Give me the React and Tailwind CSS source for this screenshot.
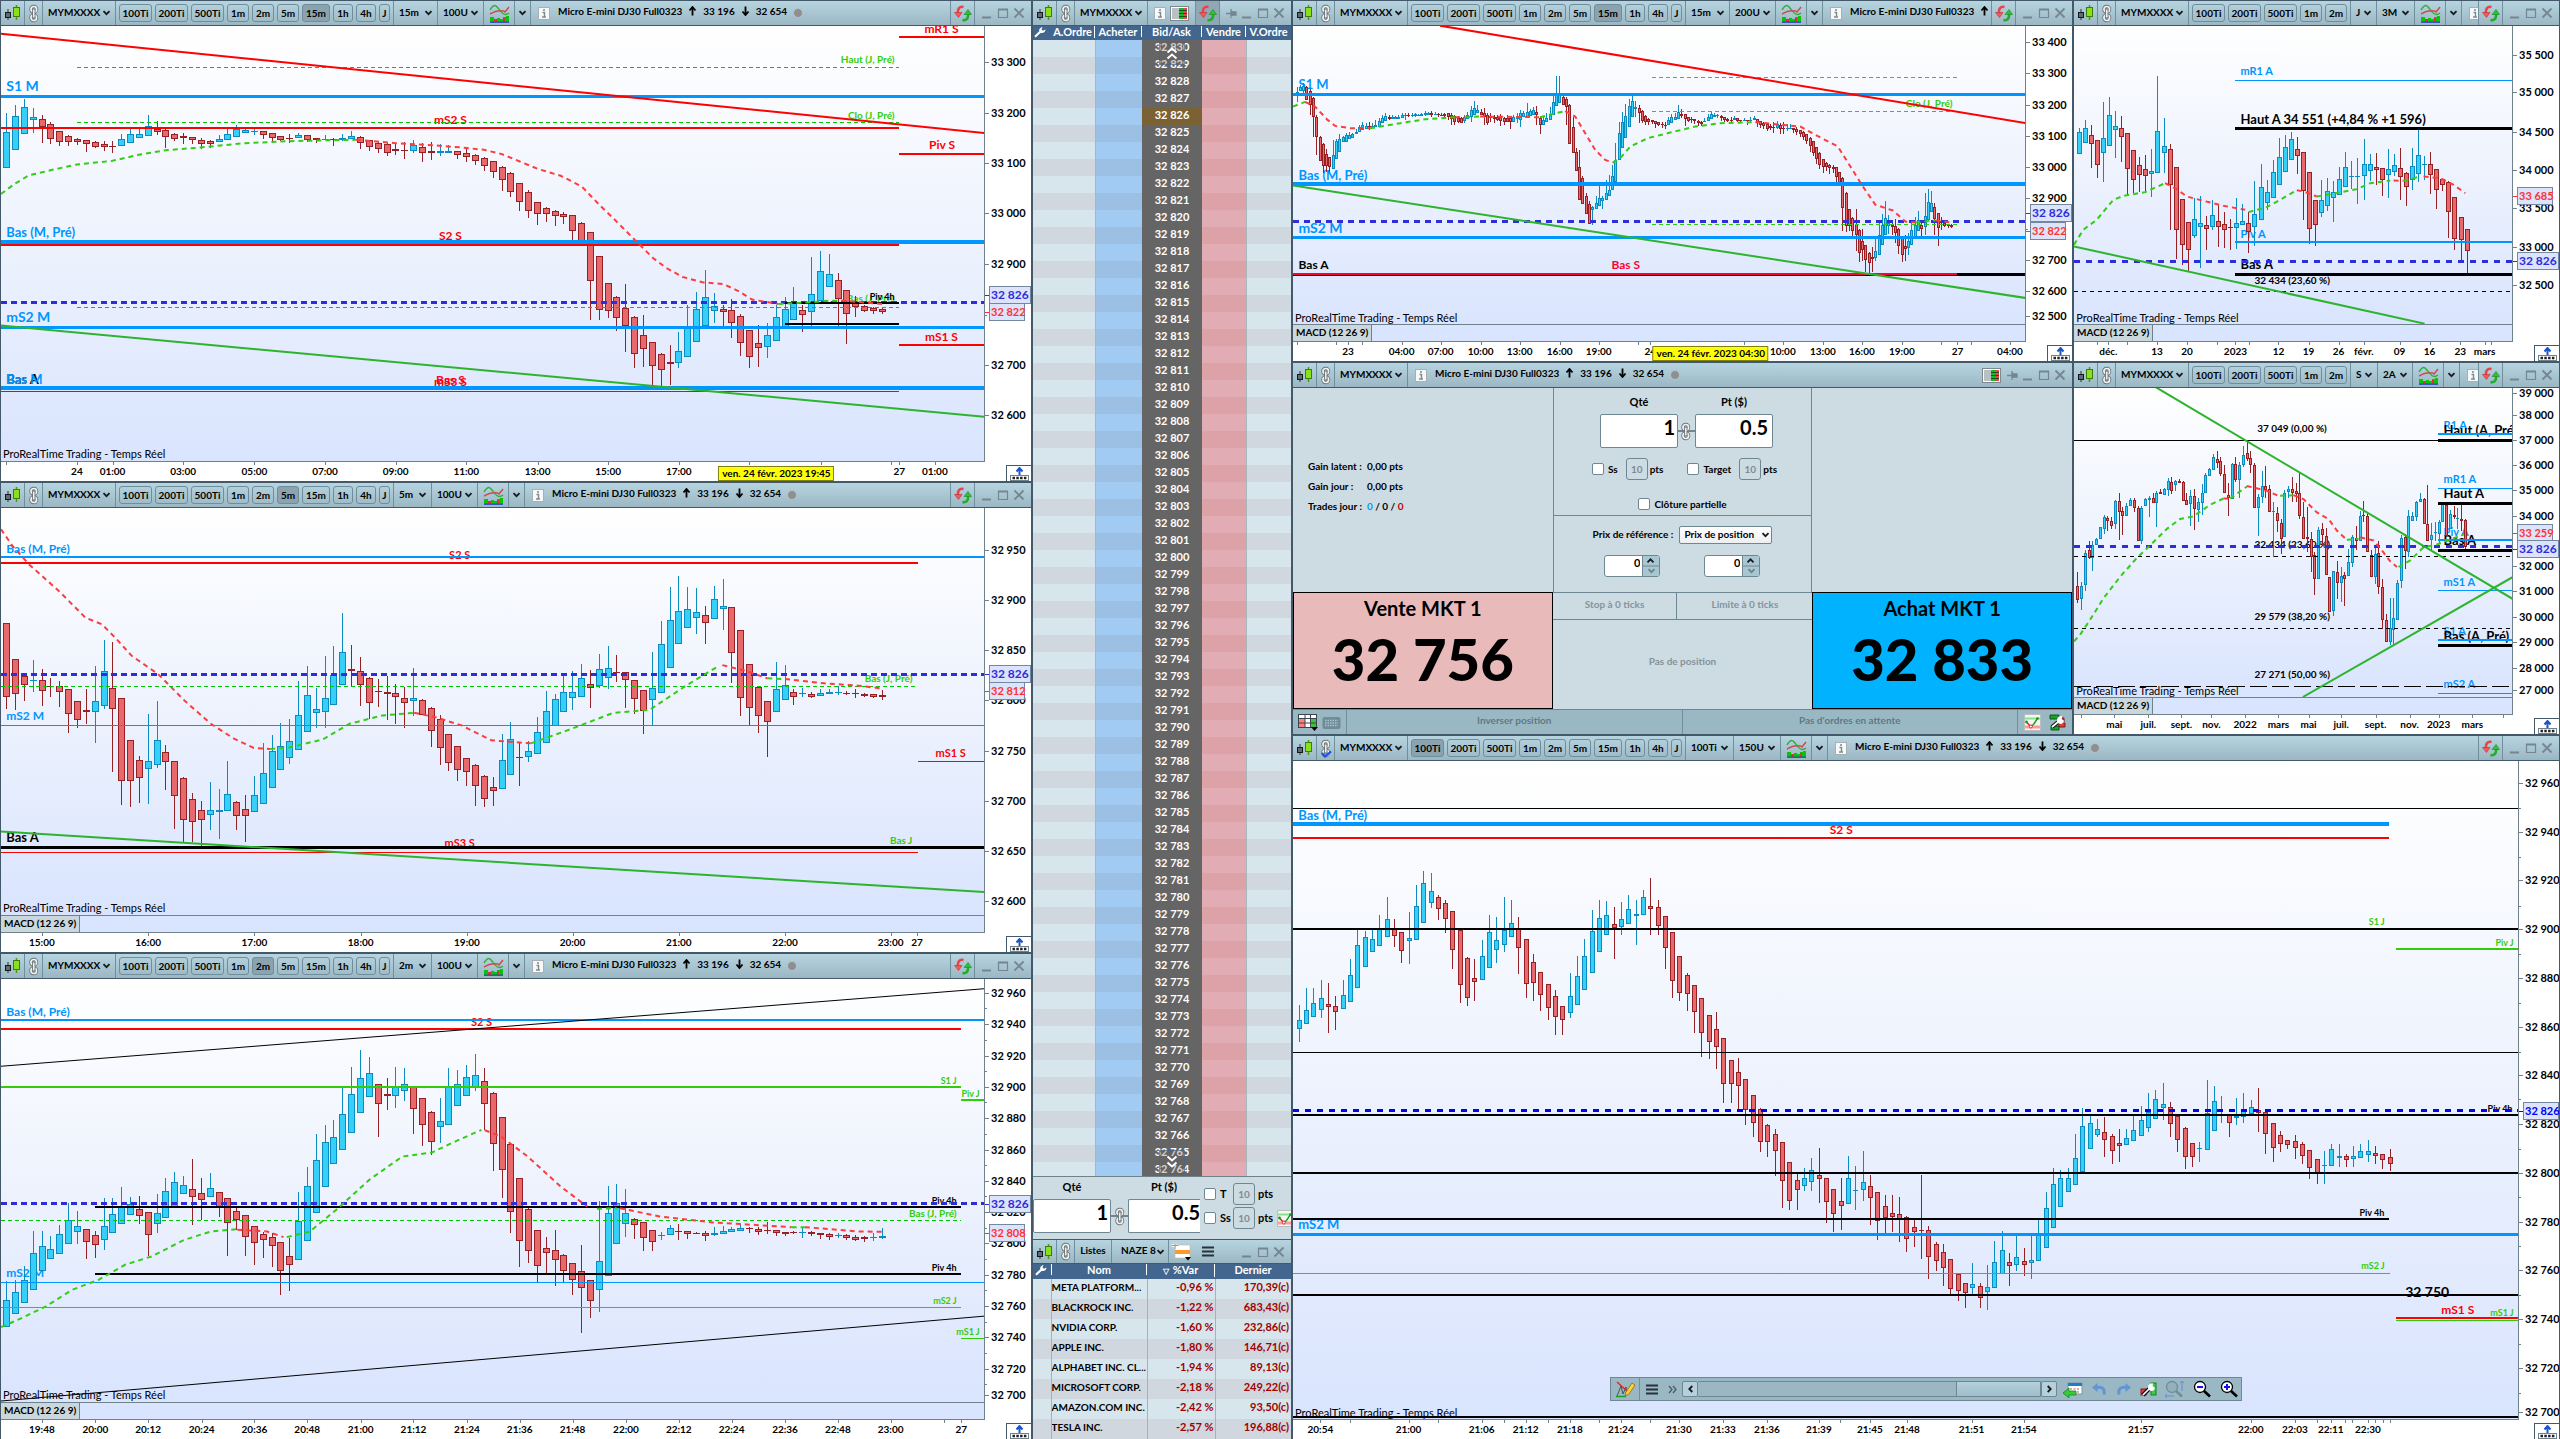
import React, { useLayoutEffect, useRef, useState } from "react";

/* ---------- price series: direction, high, body top, body bottom, low ---------- */

const series15m =
  "u340 397 506,u315 349 452,u297 322 402,u324 352 361 399,d345 358 380 429,d366 373 419 432,d393 394 428 440,d406 409 428 440,d414 418 428 436,d420 422 434 456,d425 427 441 446,d425 433 442 455,d424 439 442 461,u403 417 440,u386 403 431,u382 403 414,u345 378 410,d362 386 396 406,d388 389 413 446,d400 401 419 425,d400 409 416 432,d411 412 421 434,d415 420 432 447,d420 424 433 445,u404 419 427,u388 401 421,u375 388 412,u383 391 400,u386 393 396 407,d393 394 407 419,d399 400 416 424,d408 409 422 424,d401 414 416 430,u398 405 416,d404 407 421 428,d415 416 422 430,u404 418 419,d414 418 421 438,u402 415 422 424,u394 408 417,d410 412 429 448,d420 422 442 455,d427 430 447 459,d430 434 459 470,d433 447 455 467,d428 450 452 479,u420 437 453 459,d430 442 460 486,d428 454 461 482,u434 453 459 468,u436 453 459,d453 454 467 478,d449 459 473 488,d464 465 483 497,d472 475 498 515,d484 485 518 534,d500 502 542 573,d517 520 578 593,d549 550 608 633,d570 578 635 655,d606 607 644 675,d622 626 643 666,d632 634 650 678,d636 643 653 673,d646 647 695 723,d668 670 734 740,d696 698 845 960,d768 770 932 961,d849 850 935 956,d890 893 956 993,d852 924 979 1056,d950 952 1064 1107,d946 1006 1049 1104,d1026 1028 1100 1158,d1062 1063 1113 1165,d1035 1087 1094 1158,u997 1053 1091 1106,u917 978 1073,u876 928 1028,u810 892 979,u880 920 934 971,d917 928 938 978,d897 931 969 1016,d943 950 1031 1069,d990 991 1074 1107,d975 1030 1045 1104,u969 1007 1041 1077,u917 953 1024,u891 928 989,u861 906 960,d916 930 947 997,u773 883 937 978,u755 814 904,u762 823 863,d819 841 898 978,d870 871 944 1032,d890 910 921 953,d915 920 935 938,d922 925 935 942,d926 928 937 944";

const series5m =
  "d430 430 653 690,d541 541 644 692,d588 591 619 665,u543 604 607 638,d571 604 635 682,d597 620 625 655,d606 622 640 683,d630 631 705 762,d666 667 725 747,d631 694 701 736,u562 665 698 792,u483 575 682 690,d489 628 689 881,d656 658 908 981,d783 784 907 987,d831 844 899 974,u705 847 872 978,u667 785 860 867,d798 820 849 936,d846 848 953 1053,d897 898 1024 1093,d944 962 1031 1093,d969 995 1024 1103,u911 994 1010 1055,u931 995 1000 1083,u846 947 998,d968 970 1013 1056,d951 992 1013 1092,u892 949 1000,u793 884 977,u768 817 928,u732 802 875,u721 788 838 857,u607 710 814,u561 647 760,u627 691 703 749,u530 656 698 749,u501 587 677,u400 518 619,d498 569 577 620,d535 575 617 680,d595 596 671 720,d600 635 640 685,d590 638 646 723,d616 641 654 736,d625 656 673 747,u568 658 665 711,d660 662 708,d684 686 758 806,d709 720 808 858,d766 767 852 879,d801 802 875 908,d838 839 881 922,d857 859 922 982,d891 892 962 987,d897 926 937 982,u766 845 931,u729 782 890,d791 836 838 924,u786 818 836 849,u715 760 826,u636 695 793,u644 659 742,u587 640 700,u575 638 656 693,u555 598 655,d572 614 627 686,u525 569 620 628,u501 566 596 630,d528 580 583 610,d578 580 602 688,d602 604 661 707,d632 634 695 765,u517 626 664 738,u425 493 643,u321 422 568,u289 395 493,u321 389 445,u324 397 415 465,d380 407 431 495,u318 358 419,u297 379 389 451,d382 382 521 612,d451 452 658 712,d555 556 688 738,d620 623 713 764,d665 667 730 836,u549 631 700,u558 617 664,d630 640 653 677,u628 643 646 655,d640 646 653 656,u630 643 650,u629 640 646,u620 639 640 648,d637 641 646 648,d630 643 646 658,d643 645 650 655,d645 646 653 658,d634 649 653 662";

const series2m =
  "u993 1051 1132,u991 1027 1094,u949 990 1061,u843 911 1022,u843 889 964,u858 898 928,u825 853 914,u760 811 883,u785 829 848 884,d838 839 878 927,d843 857 887 926,u745 830 872 902,u744 793 850,u711 769 823,u741 762 797,d740 778 800 824,d787 788 857 918,u734 790 823 850,u685 724 805,u667 697 776,u677 704 734,d627 718 743 827,d684 730 752 810,u669 715 743,d726 727 773 801,d744 746 821 920,d772 784 811 842,d796 796 863 920,d829 829 881 945,d847 853 871 926,d850 862 889 951,d876 877 965 1035,d866 919 947 1025,u727 814 932,u651 709 875,u553 631 790,u526 577 710,u511 562 643,u413 493 601,u351 433 548,u300 385 490,u321 370 440,d401 403 461 561,d384 433 439 480,u351 409 437 474,u353 403 424 452,d412 412 476 551,d445 445 524 587,d484 485 575 614,u444 514 530 578,u353 409 524,u360 403 467,u345 382 437,u312 376 410 424,d354 394 461 540,d427 428 581 663,d501 502 661 746,d580 583 787 851,d684 685 875 953,d775 778 905 941,d841 842 949 998,d862 895 910 974,d840 901 932 1010,d914 916 965 997,d939 940 992 1035,d885 964 1016 1149,d991 991 1055 1104,u753 934 1021 1086,u708 791 980,u702 760 883,u717 790 823 861,d806 809 826 868,d817 818 865 903,d840 842 878 903,u846 857 860 871,u826 836 857,d824 843 844 870,d843 845 854 868,d848 850 851 853,d845 850 860 874,u833 850 855 860,u828 845 854,u832 839 848,u823 836 844,d831 834 837 850,d832 838 848 856,d817 842 843 854,d840 842 851 860,d846 847 853 860,d845 848 850 853,u832 847 848 866,d843 846 853 860,d849 850 857 868,d850 852 862 870,u850 856 857 866,d853 857 865 871,d856 861 870 875,d860 861 869 878,u850 862 866 875,u834 858 864 869";

const series15mEarlier =
  "u262 275 280 305,u255 262 272,u250 258 272 285,d258 262 300,d268 274 315 345,d290 295 352 410,d345 350 412 465,d408 412 482,d430 433 497 518,d447 462 498 515,d470 471 500 517,u420 465 507,u418 422 477,u403 418 455,u408 412 425,u400 405 425,u397 404 418,u398 402 415,u388 396 402,u375 382 397,u365 375 390,u370 378 388,d367 377 382 390,u368 377 380,u360 375 382,u355 362 380,u345 355 368,u340 348 362,d345 352 358 360,u345 351 358,u348 352 358,u345 350 358,u338 346 355,u340 345 349 360,d340 345 347 352,u338 344 347 350,u338 343 347 352,u342 345 348,u338 342 347,u333 340 345 349,u335 340 346,d334 340 346 352,u336 341 345,d338 342 346 351,d340 344 347,d340 343 347 352,d338 340 350 360,d340 344 356 374,d344 347 365 375,d348 355 367 370,d350 355 370,u345 352 362 368,u335 345 358,u318 330 350 366,u303 325 345,u315 330 340,d328 335 345,d325 340 350 375,d340 345 370 374,d338 348 354 367,d345 350 358 368,d345 350 360 364,d342 350 362 378,d350 355 365 375,d345 355 365,d350 355 365 387,u345 350 365,u340 348 358 370,u330 340 360 380,u333 340 350,u310 335 350,u328 334 348,u320 330 345,d318 335 345 375,d350 355 375 403,u350 360 375,u340 355 365,u320 345 360,u280 305 345,u228 280 318,u228 282 310,d285 292 315,d290 297 320 375,d312 315 432,d350 380 460,d445 455 512,d450 500 600,d530 535 612,d580 590 643,d605 612 672,u620 623 632 675,u590 610 628,u560 595 620,u590 595 605 627,u540 580 602,u525 570 590,u495 530 572,u430 480 548,u365 400 480,u335 365 445";

const seriesDay =
  "u384 395 461,u360 385 428,d375 406 433 503,d420 421 494 534,u306 415 458 546,u291 346 437,u333 379 391 474,d348 385 412 486,d399 400 506 585,d450 451 542 580,d471 496 524 578,d465 508 530 579,u447 514 521 591,u228 394 518,u354 439 458 520,d432 448 557 690,d501 502 692 777,d597 598 737 795,d666 667 752 813,u594 658 710 714,u588 670 683 804,d648 676 689 750,u600 646 683 690,d612 664 683 741,d636 674 692 746,d657 683 686 750,u594 670 686 748,u612 664 677,d638 670 696 759,u543 643 683 738,u492 562 661,u540 577 611 632,u480 517 596,u414 472 557,u405 442 515,u396 418 479,d411 448 467 522,d456 457 575 660,d515 517 689 732,d600 601 677 738,u540 600 640 652,u534 574 620 635,u543 577 596 666,u502 538 587,u456 502 563,u483 530 532 568,u474 530 532 612,u417 493 530 600,u462 493 512 545,d459 502 510 555,d504 505 542 588,u447 508 524 594,u461 496 515 530,d444 505 532 600,d515 520 563 620,u444 499 542 570,u390 466 521 548,u468 492 494 542,d456 493 524 582,d506 508 572 627,d537 539 557 575,d545 547 638 714,d591 592 717 752,d651 652 722 782,d687 688 755 820";

const seriesWeek =
  "d640 682 724 733,u670 682 722 755,u575 583 680 698,d545 575 597 602,u545 560 598 638,u536 541 560,u503 504 541,u467 475 510 524,d470 478 487 515,d475 485 502 510,u422 427 494 510,d402 426 458 542,d445 457 470 528,u432 441 470,u416 424 440,d418 422 447 460,d440 446 545,u440 447 545 557,u415 421 442,u410 416 424 473,d402 415 432,u396 402 432 503,d388 399 405,u386 390 407,u357 366 392 410,d353 367 394 405,u362 366 378 396,d358 364 372,d365 368 425,d400 424 437,u393 411 434 502,d390 411 451 512,u415 430 452 488,u374 401 432 468,u340 348 402,u325 330 350,u282 293 332,d275 300 312 325,d292 306 343 350,d318 343 400,d370 408 418 470,u312 314 420,d294 314 362 368,u307 316 362 415,u258 288 316 322,d245 281 298 305,d275 297 318 340,d310 317 447,u403 412 446 530,u334 381 412 433,d320 380 392 418,d378 388 458,u430 456 460 596,d445 462 486 520,d480 493 540 586,u392 400 535,u380 390 398 415,d352 388 402 430,d370 396 403 430,d342 400 470 480,d430 475 540,d443 535 541 580,d520 541 595 640,d580 590 662 710,u503 512 660,d492 510 527 560,d507 530 650,d655 655 762,u636 637 757 773,d608 640 672 722,u626 652 672 730,d640 650 660 743,u570 610 652,u528 535 612 626,d500 537 545 574,u456 470 546,d425 468 472 488,d458 472 580,d575 588 655,u560 585 655 675,d545 583 686 708,d662 685 784 812,d768 786 852,u720 808 852 862,u720 780 815 858,u665 672 785,u528 538 668 690,d524 534 576 630,u453 472 580 595,u460 471 487,u425 428 475 485,u400 420 430,d418 420 495,d378 494 545,u492 528 543 575,u488 518 522 545,u482 490 525 553,u432 436 490,d432 438 530,u452 466 510,d440 468 475 480,u448 478 480 510,d436 480 486 515,d480 482 565 570";

const seriesTicks =
  "u601 633 654 684,u563 611 643,u563 596 627,u546 585 611 630,d552 598 605 664,d580 602 616 657,u546 578 609,u498 533 593,u434 468 562,u436 449 515,u434 453 482,u401 432 469,u361 408 449,d410 432 447 472,d437 438 480 506,u394 451 458 510,u334 380 456,u303 328 418,u307 346 374 384,d356 360 387 411,d366 373 409 440,d391 391 478 520,d433 434 556 597,d494 495 585 603,d498 540 549 591,u455 491 545,u401 437 518,u405 455 478 506,u361 433 466 482,u366 417 449,d405 432 473 531,d453 453 553 585,d488 504 551 591,d527 527 578 614,d553 553 607 634,d568 580 627 668,d602 602 634 668,u530 580 618 630,u491 536 600,u454 491 567,u390 435 529,u367 406 482,u368 399 444,d383 421 430 498,u372 410 427 444,u356 386 420,u367 397 402 468,u345 361 400,d318 381 387 444,d366 383 425 444,d403 403 473 520,d439 439 547 585,d492 492 574 591,d530 533 576 614,d556 556 616 663,d584 585 663 717,d622 622 683 721,d617 654 694 743,d674 674 776 820,d724 724 776 820,d719 749 781 840,d765 765 834 869,d801 801 863 894,d831 832 906 928,d866 867 906 939,d878 887 926 982,d905 905 992 1053,d950 950 1037 1058,d975 991 1012 1058,u964 985 1003 1016,u942 969 994 1016,d920 980 989 1042,d985 985 1039 1086,d1011 1011 1066 1107,d987 1038 1048 1102,u938 985 1044,u960 1012 1014 1058,u927 994 1012 1038,d980 1003 1031 1090,d1018 1018 1081 1125,d1025 1049 1076 1108,d1025 1063 1073 1107,d1029 1067 1078 1129,d1071 1072 1121 1150,d1078 1096 1106 1140,d980 1101 1104 1166,d1093 1101 1162 1211,d1128 1132 1171 1193,d1134 1150 1186 1227,d1167 1167 1233 1245,d1201 1201 1237 1260,d1219 1219 1242 1275,u1176 1222 1231 1245,d1221 1226 1253 1275,u1180 1228 1240 1280,u1127 1173 1232,u1105 1147 1201,d1154 1174 1182 1226,u1116 1163 1179 1193,d1143 1170 1179 1204,u1114 1168 1175 1211,u1078 1114 1170,u1018 1054 1141,u964 1000 1098,u969 985 1050,u964 985 1018,u889 942 1001,u829 870 972,u843 863 921,u855 876 891 894,d851 884 901 939,d888 892 926 954,d878 909 914 951,u878 896 912,u849 879 903,u825 856 892,u796 838 874 883,u791 809 854,u775 822 831 856,d816 827 865 894,d847 847 901 928,d873 874 939 966,d907 907 939 961,u905 920 922 950,u768 841 923,u780 814 881,u803 843 845 863,d845 846 863 894,u807 847 853 867,u796 837 850 864,u812 827 844,d786 835 841 883,d838 838 888 932,d863 863 919 950,d882 890 910 928,d901 901 912 921,d890 904 919 943,d905 911 937 954,d923 923 963 988,d943 943 975 999,u927 956 959 999,u911 922 959,u911 936 941 961,d932 938 946 961,u914 938 943 961,u911 925 941,u901 925 934 950,d915 930 937 954,d932 932 946 966,d921 939 954 970";

function parse(text, x0, step) {
  return text.split(",").map((s, i) => {
    const [high, top, bottom, low] = s.slice(1).split(" ").map(Number);
    return { up: s[0] === "u", x: x0 + step * i, high, top, bottom, low: low ?? bottom };
  });
}

const RED = "#ff0000";
const BLUE = "#0096ff";
const GREEN = "#32cd0a";
const DGREEN = "#00c800";
const NAVY = "#2d2ddc";
const TREND = "#2db42d";
const BLACK = "#000000";
const G = "#32cd14";
const R = "#ff3c3c";

const m15 = parse(series15m, 10, 13.4);
const m15Wide = [
  ...parse(series15mEarlier, 13, 6.57),
  ...m15.map((c, i) => {
    const f = (v) => 219.5 + (v - 187) * 0.6152;
    return { up: c.up, x: 670.4 + 6.57 * i, high: f(c.high), top: f(c.top), bottom: f(c.bottom), low: f(c.low) };
  }),
];

/* levels: [y, x from, x to, colour, width, dash]; labels: [x, y, text, colour, size, anchor] */
const chart15m = {
  box: [2, 78, 1493, 1385],
  candles: m15,
  body: 7,
  averages: [
    [G, "2,583 22,553 44,527 80,510 117,494 171,483 211,465 252,451 305,443 372,430 440,424 506,421 540,420"],
    [R, "540,420 600,430 660,437 700,443 734,450 761,463 788,485 815,507 850,528 882,560 910,618 936,668 962,720 990,775 1010,805 1035,832 1065,848 1096,853 1120,875 1140,900 1180,913"],
    [G, "1180,913 1230,908 1250,904 1275,903"],
    [R, "1275,903 1337,913"],
  ],
  levels: [
    [200, 117, 1363, DGREEN, 1, "4 3"],
    [367, 117, 1363, DGREEN, 1, "4 3"],
    [922, 117, 1363, DGREEN, 1, "4 3"],
    [384, 2, 1363, RED, 2],
    [111, 1363, 1493, RED, 2],
    [462, 1363, 1493, RED, 2],
    [1035, 1363, 1493, RED, 2],
    [735, 2, 1363, RED, 2],
    [1175, 2, 1363, RED, 1],
    [287, 2, 1493, BLUE, 3],
    [726, 2, 1493, BLUE, 4],
    [983, 2, 1493, BLUE, 3],
    [1167, 2, 1493, BLUE, 4],
    [907, 2, 1493, NAVY, 3, "6 4"],
    [909, 1190, 1363, BLACK, 2],
    [972, 1190, 1363, BLACK, 2],
  ],
  trends: [
    [2, 101, 1493, 400, RED, 2],
    [2, 978, 1493, 1252, TREND, 2],
  ],
  labels: [
    [1427, 99, "mR1 S", RED, 12, "middle"],
    [1356, 190, "Haut (J, Pré)", GREEN, 10, "end"],
    [10, 272, "S1 M", BLUE, 14],
    [1356, 358, "Clo (J, Pré)", GREEN, 10, "end"],
    [683, 371, "mS2 S", RED, 12, "middle"],
    [1428, 447, "Piv S", RED, 12, "middle"],
    [10, 713, "Bas (M, Pré)", BLUE, 13],
    [683, 720, "S2 S", RED, 12, "middle"],
    [10, 968, "mS2 M", BLUE, 14],
    [1356, 908, "Bas (J, Pré)", GREEN, 10, "end"],
    [1356, 900, "Piv 4h", BLACK, 9, "end"],
    [1427, 1023, "mS1 S", RED, 12, "middle"],
    [10, 1155, "Bas A", BLACK, 13],
    [10, 1155, "Bas M", BLUE, 13],
    [683, 1155, "Bas S", "#ff0032", 12, "middle"],
    [683, 1161, "mS3 S", RED, 12, "middle"],
    [5, 1376, "ProRealTime Trading - Temps Réel", BLACK, 11, "start", 400],
  ],
  prices: [[187, "33 300"], [338, "33 200"], [490, "33 100"], [641, "33 000"], [793, "32 900"], [945, ""], [1096, "32 700"], [1248, "32 600"]],
  tags: [[887, "32 826", NAVY], [937, "32 822", "#ff3232"]],
  times: [[10, ""], [117, "24"], [171, "01:00"], [278, "03:00"], [386, "05:00"], [493, "07:00"], [600, "09:00"], [707, "11:00"], [815, "13:00"], [922, "15:00"], [1029, "17:00"], [1136, ""], [1244, ""], [1350, ""], [1363, "27"], [1417, "01:00"]],
  cursor: [1177, "ven. 24 févr. 2023 19:45"],
};

const chart5m = {
  box: [2, 84, 1493, 1312],
  candles: parse(series5m, 10, 13.4),
  body: 7,
  averages: [
    [R, "2,148 20,200 45,255 90,335 130,415 155,435 175,475 200,530 240,585 280,665 320,735 355,780 385,808 410,811"],
    [G, "410,811 440,806 490,782 530,735 580,710 628,702"],
    [R, "628,702 660,715 700,740 745,785 805,794"],
    [G, "805,794 860,755 930,702 985,693 1040,620 1090,560"],
    [R, "1095,558 1130,575 1163,598"],
    [G, "1163,598 1190,600"],
    [R, "1190,600 1250,613 1300,620 1335,628"],
  ],
  levels: [
    [231, 2, 1493, BLUE, 2],
    [249, 2, 1391, RED, 2],
    [586, 2, 1493, NAVY, 3, "6 4"],
    [620, 2, 1391, DGREEN, 1, "4 3"],
    [740, 2, 1493, BLUE, 1],
    [848, 1391, 1493, RED, 1],
    [1108, 2, 1493, BLACK, 3],
    [1121, 2, 1391, RED, 1],
  ],
  trends: [[2, 1060, 1493, 1243, TREND, 2]],
  labels: [
    [10, 219, "Bas (M, Pré)", BLUE, 12],
    [697, 239, "S2 S", RED, 11, "middle"],
    [1383, 610, "Bas (J, Pré)", GREEN, 10, "end"],
    [10, 725, "mS2 M", BLUE, 12],
    [1441, 836, "mS1 S", RED, 11, "middle"],
    [10, 1093, "Bas A", BLACK, 13],
    [697, 1107, "mS3 S", RED, 11, "middle"],
    [1383, 1097, "Bas J", GREEN, 10, "end"],
    [5, 1304, "ProRealTime Trading - Temps Réel", BLACK, 11, "start", 400],
  ],
  prices: [[210, "32 950"], [361, "32 900"], [513, "32 850"], [664, "32 800"], [816, "32 750"], [967, "32 700"], [1119, "32 650"], [1270, "32 600"]],
  tags: [[585, "32 826", NAVY], [635, "32 812", "#ff3232"]],
  times: [[64, "15:00"], [225, "16:00"], [386, "17:00"], [547, "18:00"], [708, "19:00"], [868, "20:00"], [1029, "21:00"], [1190, "22:00"], [1350, "23:00"], [1390, "27"]],
};

const chart2m = {
  box: [2, 87, 1493, 1357],
  candles: parse(series2m, 10, 13.4),
  body: 7,
  averages: [
    [G, "2,1132 30,1108 70,1070 110,1020 150,990 190,945 230,920 280,870 320,845 360,838"],
    [R, "360,840 405,845 430,862"],
    [G, "435,862 470,845 510,780 560,690 610,620 655,608 690,575 730,540"],
    [R, "735,541 760,560 800,620 850,710 890,770"],
    [G, "905,777 935,775"],
    [R, "940,775 1000,800 1080,818 1150,826 1200,832"],
    [G, "1200,832 1220,832"],
    [R, "1220,832 1300,845 1337,846"],
  ],
  levels: [
    [210, 2, 1493, BLUE, 2],
    [237, 2, 1457, RED, 2],
    [411, 2, 1457, GREEN, 2],
    [450, 1457, 1493, GREEN, 2],
    [760, 2, 1493, NAVY, 3, "6 4"],
    [771, 145, 1457, BLACK, 2],
    [811, 2, 1457, DGREEN, 1, "4 3"],
    [972, 145, 1457, BLACK, 2],
    [997, 2, 1493, BLUE, 1],
    [1072, 2, 1457, GREEN, 1],
    [1165, 1457, 1493, GREEN, 1],
  ],
  trends: [
    [2, 349, 1493, 116, BLACK, 1],
    [2, 1354, 1493, 1099, BLACK, 1],
  ],
  labels: [
    [10, 197, "Bas (M, Pré)", BLUE, 12],
    [730, 227, "S2 S", RED, 11, "middle"],
    [1450, 402, "S1 J", GREEN, 9, "end"],
    [1485, 441, "Piv J", GREEN, 9, "end"],
    [1450, 763, "Piv 4h", BLACK, 9, "end"],
    [1450, 802, "Bas (J, Pré)", GREEN, 10, "end"],
    [1450, 963, "Piv 4h", BLACK, 9, "end"],
    [10, 983, "mS2 M", BLUE, 12],
    [1450, 1062, "mS2 J", GREEN, 9, "end"],
    [1485, 1155, "mS1 J", GREEN, 9, "end"],
    [5, 1349, "ProRealTime Trading - Temps Réel", BLACK, 11, "start", 400],
  ],
  prices: [[128, "32 960"], [175, ""], [222, "32 940"], [270, ""], [317, "32 920"], [364, ""], [410, "32 900"], [457, ""], [504, "32 880"], [552, ""], [600, "32 860"], [646, ""], [693, "32 840"], [740, ""], [787, "32 820"], [834, ""], [881, "32 800"], [928, ""], [975, "32 780"], [1022, ""], [1069, "32 760"], [1116, ""], [1163, "32 740"], [1210, ""], [1257, "32 720"], [1304, ""], [1336, "32 700"]],
  tags: [[762, "32 826", NAVY], [850, "32 808", "#ff3232"]],
  times: [[64, "19:48"], [145, "20:00"], [225, "20:12"], [306, "20:24"], [386, "20:36"], [466, "20:48"], [547, "21:00"], [627, "21:12"], [708, "21:24"], [788, "21:36"], [868, "21:48"], [949, "22:00"], [1029, "22:12"], [1109, "22:24"], [1190, "22:36"], [1270, "22:48"], [1350, "23:00"], [1431, ""], [1457, "27"]],
};

const chart15mWide = {
  box: [6, 78, 1471, 973],
  candles: m15Wide,
  body: 3,
  averages: [
    [G, "6,320 30,306"],
    [R, "30,306 50,320 75,360 90,378 120,385 160,385"],
    [G, "160,385 220,370 270,358 330,352"],
    [R, "330,352 350,352"],
    [G, "350,352 380,350"],
    [R, "380,350 500,352"],
    [G, "500,352 530,340 550,334"],
    [R, "550,334 570,350 590,400 610,450 630,480 645,488"],
    [G, "645,488 660,475 680,440 715,415 760,398 810,380 860,370 930,367"],
    [R, "930,367 985,375 1020,380 1050,405 1095,440 1120,500 1145,560 1170,615 1205,632 1230,665 1250,668"],
    [G, "1250,668 1290,662"],
    [R, "1290,662 1321,668"],
  ],
  levels: [
    [230, 723, 1334, GREEN, 1, "4 3"],
    [332, 723, 1334, GREEN, 1, "4 3"],
    [674, 723, 1334, GREEN, 1, "4 3"],
    [281, 6, 1471, BLUE, 3],
    [552, 6, 1471, BLUE, 4],
    [712, 6, 1471, BLUE, 3],
    [665, 6, 1471, NAVY, 3, "6 5"],
    [824, 6, 1471, BLACK, 3],
    [823, 6, 1334, "#ff0032", 2],
  ],
  trends: [
    [300, 77, 1471, 370, RED, 2],
    [6, 557, 1471, 895, TREND, 2],
  ],
  labels: [
    [17, 266, "S1 M", BLUE, 13],
    [1324, 322, "Clo (J, Pré)", GREEN, 10, "end"],
    [17, 541, "Bas (M, Pré)", BLUE, 13],
    [17, 699, "mS2 M", BLUE, 14],
    [17, 809, "Bas A", BLACK, 12],
    [671, 809, "Bas S", "#ff0032", 12, "middle"],
    [10, 966, "ProRealTime Trading - Temps Réel", BLACK, 11, "start", 400],
  ],
  prices: [[126, "33 400"], [219, "33 300"], [314, "33 200"], [407, "33 100"], [500, "33 000"], [594, "32 900"], [687, ""], [780, "32 700"], [873, "32 600"], [950, "32 500"]],
  tags: [[641, "32 826", NAVY], [694, "32 822", "#ff3232"]],
  times: [[13, ""], [91, ""], [116, "23"], [143, ""], [223, "04:00"], [301, "07:00"], [381, "10:00"], [459, "13:00"], [539, "16:00"], [617, "19:00"], [696, ""], [720, "24"], [907, ""], [985, "10:00"], [1065, "13:00"], [1143, "16:00"], [1223, "19:00"], [1301, ""], [1334, "27"], [1361, ""], [1439, "04:00"]],
  cursor: [841, "ven. 24 févr. 2023 04:30"],
};

const chartDay = {
  box: [12, 78, 1328, 973],
  candles: parse(seriesDay, 26, 18.17),
  body: 5,
  averages: [
    [G, "12,735 40,690 80,660 130,600 160,588 225,577 285,550"],
    [R, "285,550 320,568 350,590 400,603 460,618 525,630"],
    [G, "535,637 590,622 630,600 680,571"],
    [R, "680,571 700,575 740,590"],
    [G, "740,590 810,578 860,568 900,550 960,542"],
    [R, "970,542 1000,543"],
    [G, "1000,543 1050,530"],
    [R, "1060,530 1110,535 1150,555 1185,580"],
  ],
  levels: [
    [241, 496, 1328, BLUE, 1],
    [385, 496, 1328, BLACK, 3],
    [726, 496, 1328, BLUE, 2],
    [785, 12, 1328, NAVY, 3, "6 6"],
    [824, 496, 1328, BLACK, 3],
    [874, 12, 1328, BLACK, 1, "4 4"],
  ],
  trends: [[12, 740, 1063, 972, TREND, 2]],
  labels: [
    [511, 226, "mR1 A", BLUE, 11],
    [511, 371, "Haut A 34 551 (+4,84 % +1 596)", BLACK, 13],
    [511, 714, "Piv A", BLUE, 11],
    [511, 809, "Bas A", BLACK, 13],
    [553, 852, "32 434 (23,60 %)", BLACK, 10],
    [19, 966, "ProRealTime Trading - Temps Réel", BLACK, 11, "start", 400],
  ],
  prices: [[164, "35 500"], [277, "35 000"], [395, "34 500"], [509, "34 000"], [626, "33 500"], [743, "33 000"], [857, "32 500"]],
  tags: [[588, "33 685", "#ff3232"], [785, "32 826", NAVY]],
  times: [[80, ""], [115, "déc."], [170, ""], [261, "13"], [351, "20"], [442, ""], [496, "2023"], [536, ""], [625, "12"], [715, "19"], [805, "26"], [881, "févr."], [988, "09"], [1078, "16"], [1170, "23"], [1243, "mars"], [1262, ""]],
};

const chartWeek = {
  box: [12, 84, 1328, 1018],
  candles: parse(seriesWeek, 22, 11.28),
  body: 3,
  averages: [
    [G, "12,850 30,830 60,785 100,720 150,655 200,598 240,560 290,510 330,480 370,472 420,437 460,418"],
    [R, "460,418 480,418"],
    [G, "480,418 530,382"],
    [R, "530,380 550,385 590,395 630,412"],
    [G, "630,410 670,408"],
    [R, "670,408 700,420 740,460 775,480 800,515 830,543"],
    [G, "830,543 865,540"],
    [R, "870,535 910,545 935,575 960,608 980,625"],
    [G, "985,625 1020,605 1060,565 1100,557 1180,527"],
  ],
  levels: [
    [241, 12, 1328, BLACK, 1],
    [222, 1104, 1328, BLUE, 2],
    [241, 1104, 1328, BLACK, 3],
    [385, 1104, 1328, BLUE, 1],
    [431, 1104, 1328, BLACK, 3],
    [543, 1104, 1328, BLUE, 2],
    [563, 12, 1328, NAVY, 3, "6 6"],
    [574, 1104, 1328, BLACK, 3],
    [592, 12, 1328, BLACK, 1, "4 4"],
    [694, 1104, 1328, BLUE, 1],
    [808, 12, 1328, BLACK, 1, "4 4"],
    [846, 1104, 1328, BLUE, 2],
    [862, 1104, 1328, BLACK, 3],
    [986, 12, 1328, BLACK, 1, "17 5"],
    [1006, 1104, 1328, BLUE, 1],
  ],
  trends: [
    [258, 82, 1328, 722, TREND, 2],
    [698, 1018, 1328, 655, TREND, 2],
  ],
  labels: [
    [561, 218, "37 049 (0,00 %)", BLACK, 10],
    [553, 569, "32 434 (23,60 %)", BLACK, 10],
    [553, 785, "29 579 (38,20 %)", BLACK, 10],
    [553, 962, "27 271 (50,00 %)", BLACK, 10],
    [1120, 208, "R1 A", BLUE, 11],
    [1120, 226, "Haut (A, Pré", BLACK, 13],
    [1120, 370, "mR1 A", BLUE, 11],
    [1120, 416, "Haut A", BLACK, 13],
    [1120, 531, "Piv A", BLUE, 11],
    [1120, 560, "Bas A", BLACK, 13],
    [1120, 681, "mS1 A", BLUE, 11],
    [1120, 832, "S1 A", BLUE, 11],
    [1120, 848, "Bas (A, Pré)", BLACK, 13],
    [1120, 992, "mS2 A", BLUE, 11],
    [19, 1011, "ProRealTime Trading - Temps Réel", BLACK, 11, "start", 400],
  ],
  prices: [[100, "39 000"], [167, "38 000"], [242, "37 000"], [317, "36 000"], [393, "35 000"], [470, "34 000"], [622, "32 000"], [697, "31 000"], [775, "30 000"], [851, "29 000"], [929, "28 000"], [998, "27 000"]],
  tags: [[523, "33 259", "#ff3232"], [572, "32 826", NAVY]],
  times: [[34, ""], [133, "mai"], [235, "juil."], [334, "sept."], [424, "nov."], [525, "2022"], [625, "mars"], [715, "mai"], [813, "juil."], [916, "sept."], [1018, "nov."], [1105, "2023"], [1206, "mars"], [1298, ""]],
};

const chartTicks = {
  box: [7, 57, 3010, 1523],
  candles: parse(seriesTicks, 21, 17.936),
  body: 5,
  averages: [],
  levels: [
    [161, 7, 3010, BLACK, 1],
    [198, 7, 2692, BLUE, 4],
    [229, 7, 2692, RED, 2],
    [429, 7, 2692, GREEN, 1],
    [432, 7, 3010, BLACK, 2],
    [476, 2709, 3010, GREEN, 2],
    [705, 7, 3010, BLACK, 1],
    [834, 7, 3010, "#0000ff", 3, "6 6"],
    [846, 7, 3010, BLACK, 2],
    [975, 7, 3010, BLACK, 2],
    [1078, 7, 2692, BLACK, 2],
    [1110, 7, 3010, BLUE, 3],
    [1197, 7, 2694, GREEN, 1],
    [1247, 7, 3010, BLACK, 2],
    [1302, 2709, 3010, GREEN, 1],
    [1299, 2709, 3010, RED, 2],
    [1519, 7, 3010, BLACK, 2],
  ],
  trends: [],
  labels: [
    [20, 189, "Bas (M, Pré)", BLUE, 13],
    [1350, 219, "S2 S", RED, 12, "middle"],
    [2681, 422, "S1 J", GREEN, 9, "end"],
    [2997, 469, "Piv J", GREEN, 9, "end"],
    [2994, 839, "Piv 4h", BLACK, 9, "end"],
    [2680, 1070, "Piv 4h", BLACK, 9, "end"],
    [20, 1099, "mS2 M", BLUE, 13],
    [2681, 1188, "mS2 J", GREEN, 9, "end"],
    [2785, 1252, "32 750", BLACK, 14, "middle"],
    [2860, 1290, "mS1 S", RED, 12, "middle"],
    [2997, 1293, "mS1 J", GREEN, 9, "end"],
    [12, 1519, "ProRealTime Trading - Temps Réel", BLACK, 11, "start", 400],
  ],
  prices: [[106, "32 960"], [161, ""], [215, "32 940"], [270, ""], [323, "32 920"], [379, ""], [431, "32 900"], [488, ""], [541, "32 880"], [596, ""], [650, "32 860"], [705, ""], [757, "32 840"], [811, ""], [866, "32 820"], [921, ""], [974, "32 800"], [1029, ""], [1084, "32 780"], [1138, ""], [1192, "32 760"], [1247, ""], [1300, "32 740"], [1355, ""], [1409, "32 720"], [1464, ""], [1508, "32 700"]],
  tags: [[836, "32 826", "#0000ff", true]],
  times: [[74, "20:54"], [146, ""], [290, "21:00"], [361, ""], [469, "21:06"], [523, ""], [577, "21:12"], [631, ""], [685, "21:18"], [756, ""], [810, "21:24"], [881, ""], [952, "21:30"], [1060, "21:33"], [1168, "21:36"], [1295, "21:39"], [1348, ""], [1420, "21:45"], [1511, "21:48"], [1669, "21:51"], [1797, "21:54"], [2084, "21:57"], [2353, "22:00"], [2461, "22:03"], [2515, ""], [2549, "22:11"], [2585, ""], [2602, ""], [2640, "22:30"], [2657, ""], [2676, ""], [2694, ""]],
};

/* ---------- icons ---------- */

const CandleIcon = () => (
  <svg width="17" height="18" viewBox="0 0 17 18" aria-hidden="true">
    <path d="M4 5v11M12.500 1v15" stroke="#2b3538" strokeWidth="1" />
    <path d="M12.500 1v15" stroke="#4c9a10" strokeWidth="1.500" />
    <rect x="1.500" y="8.500" width="5" height="5" fill="#5f6c72" stroke="#15191b" />
    <rect x="9.500" y="3.500" width="6" height="9" fill="#8be01c" stroke="#3d7d0c" />
  </svg>
);

const ChainIcon = ({ checked }) => (
  <svg width="12" height="19" viewBox="0 0 12 19" aria-hidden="true">
    <g fill="none" stroke="#6c7478" strokeWidth="3.400">
      <rect x="3" y="2.500" width="5.500" height="5.500" rx="2.500" />
      <rect x="3" y="11" width="5.500" height="5.500" rx="2.500" />
    </g>
    <g fill="none" stroke="#f1f3f3" strokeWidth="1.700">
      <rect x="3" y="2.500" width="5.500" height="5.500" rx="2.500" />
      <rect x="3" y="11" width="5.500" height="5.500" rx="2.500" />
    </g>
    <rect x="4.500" y="5" width="2.500" height="9" rx="1.200" fill="#eef1f1" stroke="#5c6468" strokeWidth="0.800" />
    {checked && <path d="M2 14l3 3.500 6-5" fill="none" stroke="#1b50e0" strokeWidth="2" />}
  </svg>
);

const LinkedIcon = () => (
  <span className="flex flex-1 items-center justify-center bg-[linear-gradient(#6f8792,#6f8792)] bg-[length:100%_2px] bg-center bg-no-repeat">
    <ChainIcon />
  </span>
);

const Chevron = () => (
  <svg width="9" height="6" viewBox="0 0 9 6" aria-hidden="true">
    <path d="M1.500 1.200l3 3 3-3" fill="none" stroke="#141a1d" strokeWidth="1.800" />
  </svg>
);

const IndicatorIcon = () => (
  <svg width="21" height="19" viewBox="0 0 21 19" aria-hidden="true">
    <path d="M1 6c3-5 5-6 8-2s6 9 11 5" fill="none" stroke="#2fae35" strokeWidth="1.400" />
    <path d="M1 10c3-1 4-3 8-3s6-1 7 1l4-5" fill="none" stroke="#d0474d" strokeWidth="1.400" />
    <path d="M1 18V13h4v2h3v-1h3v1h3v-2h3v-1h3v6z" fill="#08c408" />
    <path d="M5 15h3v3H5zM14 14h2v4h-2z" fill="#e23030" />
    <path d="M1 18.200h19" stroke="#1c3fc0" strokeWidth="1.200" />
  </svg>
);

const InfoIcon = () => (
  <svg width="12" height="13" viewBox="0 0 12 13" aria-hidden="true">
    <rect x="0.500" y="0.500" width="11" height="12" fill="#f7f8f8" stroke="#a7b1b5" />
    <path d="M5 3h2M4.500 5.500H6.500V10M4 10h4" stroke="#7d8a90" strokeWidth="1.400" fill="none" />
  </svg>
);

const RefreshIcon = () => (
  <svg width="18" height="17" viewBox="0 0 18 17" aria-hidden="true">
    <path d="M9.500 2C5.500 1 3.500 4 4 8" fill="none" stroke="#e8454b" strokeWidth="2.600" />
    <path d="M0.500 7.500h7.500l-3.500 5z" fill="#f0595e" stroke="#c42a30" strokeWidth="0.600" />
    <path d="M8.500 15c4 1 6-2 5.500-6" fill="none" stroke="#1fae28" strokeWidth="2.600" />
    <path d="M10 9.500h7.500L14 4.500z" fill="#2cc436" stroke="#158a1d" strokeWidth="0.600" />
  </svg>
);

const PinIcon = () => (
  <svg width="11" height="9" viewBox="0 0 11 9" aria-hidden="true">
    <path d="M0 4.500h5M5 0v9M5 2l2 1h3v3H7L5 7z" fill="#74878f" stroke="#74878f" strokeWidth="1.300" />
  </svg>
);

const LadderIcon = () => (
  <svg width="19" height="15" viewBox="0 0 19 15" aria-hidden="true">
    <rect x="0.500" y="0.500" width="18" height="14" fill="#fff" stroke="#7c8a90" />
    <rect x="2" y="2" width="7" height="11" fill="#b9c0c3" />
    <rect x="9" y="2" width="4" height="11" fill="#0fbf20" />
    <rect x="13" y="2" width="4" height="11" fill="#e8444b" />
    <path d="M9 4.500h8M9 7.500h8M9 10.500h8" stroke="#104b16" strokeWidth="0.900" />
  </svg>
);

const WrenchIcon = () => (
  <svg width="12" height="12" viewBox="0 0 12 12" className="block" aria-hidden="true">
    <path d="M1 10.800L6 6" stroke="#fff" strokeWidth="2.200" />
    <path d="M5.500 6.500C4.500 3.500 6 1.500 8.500 1L7.500 3.500 9 4.800 11.500 3.500C11.500 6 9 8 5.500 6.500z" fill="#fff" />
  </svg>
);

const CheckChartIcon = () => (
  <svg width="17" height="17" viewBox="0 0 17 17" aria-hidden="true">
    <rect x="0.500" y="0.500" width="16" height="16" fill="#f4f6f6" stroke="#b7bfc2" />
    <path d="M1 4.500h15" stroke="#8ce08c" strokeWidth="2" />
    <path d="M1 13h15" stroke="#ff9a9a" strokeWidth="3" />
    <path d="M2.500 8l4 4.500" stroke="#e02020" strokeWidth="1.400" />
    <path d="M6.500 12.500l3-2 4-6" stroke="#12a012" strokeWidth="1.400" fill="none" />
    <circle cx="2.500" cy="8" r="1.400" fill="#12a012" />
    <circle cx="6.800" cy="12.500" r="1.500" fill="#fff" stroke="#e02020" />
    <circle cx="13.500" cy="4.500" r="1.300" fill="#12a012" />
  </svg>
);

const WinControls = ({ pin }) => (
  <div className="flex h-full items-center gap-1 pr-1.5 pl-1.5">
    {pin && <PinIcon />}
    <button aria-label="Réduire">
      <svg width="12" height="12" viewBox="0 0 12 12"><path d="M1 10.500h9" stroke="#74878f" strokeWidth="2" /></svg>
    </button>
    <button aria-label="Agrandir">
      <svg width="12" height="12" viewBox="0 0 12 12"><path d="M1.500 10.500v-8h9v8z" stroke="#74878f" fill="none" strokeWidth="1.200" /><path d="M1 2.500h10" stroke="#74878f" strokeWidth="2" /></svg>
    </button>
    <button aria-label="Fermer">
      <svg width="12" height="12" viewBox="0 0 12 12"><path d="M1.500 1.500l9 9M10.500 1.500l-9 9" stroke="#74878f" strokeWidth="1.800" /></svg>
    </button>
  </div>
);

/* ---------- title bar ---------- */

const BAR = "flex h-[25px] shrink-0 items-center border-b border-[#43596a] bg-linear-to-b from-[#b7d4e1] to-[#9ab7c3]";
const SEG = "flex h-full shrink-0 items-center justify-center border-r border-[#6f8f9c]";

function Pick({ value, label, width }) {
  return (
    <label className={`${SEG} ${width} relative justify-start pl-[5px]`}>
      <select aria-label={label} defaultValue={value} className="w-full appearance-none bg-transparent pb-0.5 text-[10px] font-bold outline-none">
        <option>{value}</option>
      </select>
      <span className="pointer-events-none absolute right-[4px]"><Chevron /></span>
    </label>
  );
}

const FRAMES = ["100Ti", "200Ti", "500Ti", "1m", "2m", "5m", "15m", "1h", "4h", "J"];
const FRAME_W = { "100Ti": "w-[33px]", "200Ti": "w-[33px]", "500Ti": "w-[33px]", "1m": "w-[22px]", "2m": "w-[22px]", "5m": "w-[22px]", "15m": "w-[28px]", "1h": "w-[20px]", "4h": "w-[20px]", J: "w-[11px]" };

function Quote({ short }) {
  return (
    <div className="flex h-5 min-w-0 flex-1 items-center gap-x-1.5 pb-1 text-[10px] leading-4 font-bold whitespace-nowrap">
      <span>Micro E-mini DJ30 Full0323</span>
      <svg width="9" height="10" viewBox="0 0 9 10"><path d="M4.500 9.500V2M1.500 4.500l3-3.500 3 3.500" fill="none" stroke="#000" strokeWidth="1.800" /></svg>
      {!short && (
        <>
          <span>33 196</span>
          <svg width="9" height="10" viewBox="0 0 9 10"><path d="M4.500 0.500V8M1.500 5.500l3 3.500 3-3.500" fill="none" stroke="#000" strokeWidth="1.800" /></svg>
          <span>32 654</span>
          <span className="mt-1 h-2.5 w-2.5 rounded-full border border-[#b9c4c8] bg-[#8d8f90]" />
        </>
      )}
    </div>
  );
}

function ChartBar({ active, frame, units, frames = FRAMES, quote = "full", frameWidth, unitWidth, checked }) {
  return (
    <div className={BAR}>
      <div className={`${SEG} w-6`}><CandleIcon /></div>
      <div className={`${SEG} w-[18px]`}><ChainIcon checked={checked} /></div>
      <Pick value="MYMXXXX" label="Instrument" width="w-[73px]" />
      <div className={`${SEG} gap-[3px] px-[3px]`}>
        {frames.map((f) => (
          <button
            key={f}
            className={`${FRAME_W[f]} h-[18px] rounded-[3px] border border-[#6f8d9a] pb-px text-[10px] leading-none font-bold ${f === active ? "bg-[#8ba3ae]" : ""}`}
          >
            {f}
          </button>
        ))}
      </div>
      <Pick value={frame} label="Unité de temps" width={frameWidth} />
      <Pick value={units} label="Historique" width={unitWidth} />
      <div className={`${SEG} w-[31px]`}><IndicatorIcon /></div>
      <button aria-label="Indicateurs" className={`${SEG} w-4`}><Chevron /></button>
      <div className="flex h-full min-w-0 flex-1 items-center gap-2 overflow-hidden pl-[7px]">
        <span className="shrink-0"><InfoIcon /></span>
        {quote && <Quote short={quote === "short"} />}
      </div>
      <button aria-label="Actualiser" className={`${SEG} w-[25px] border-l`}><RefreshIcon /></button>
      <WinControls />
    </div>
  );
}

/* ---------- charts ---------- */

function useSize() {
  const ref = useRef(null);
  const [size, setSize] = useState({ w: 0, h: 0 });
  useLayoutEffect(() => {
    const read = () => {
      const r = ref.current.getBoundingClientRect();
      setSize({ w: r.width, h: r.height });
    };
    read();
    const watch = new ResizeObserver(read);
    watch.observe(ref.current);
    return () => watch.disconnect();
  }, []);
  return [ref, size];
}

function Candle({ c, X, Y, body }) {
  const cx = Math.round(X(c.x));
  const half = (body - 1) / 2;
  const top = Math.round(Y(c.top));
  const h = Math.max(1, Math.round(Y(c.bottom)) - top);
  const high = Math.round(Y(c.high));
  const low = Math.round(Y(c.low));
  const edge = c.up ? "#0a8cc0" : "#962023";
  return (
    <g>
      <rect x={cx} y={high} width={1} height={Math.max(1, low - high)} fill={edge} />
      <rect x={cx - half} y={top} width={body} height={h} fill={edge} />
      {h > 2 && <rect x={cx - half + 1} y={top + 1} width={body - 2} height={h - 2} fill={c.up ? "#35cff8" : "#e8696b"} />}
    </g>
  );
}

function PriceTag({ y, text, fill, narrow }) {
  const main = fill !== "#ff3232" && !narrow;
  return (
    <g>
      <rect x={0} y={y} width={4} height={1} fill={fill} />
      <rect x={4.5} y={y - 8.5} width={main ? 41 : 35} height={17} fill="#dbe4fb" stroke="#7487a0" />
      <text x={6} y={y + 4} fontSize={main ? 12 : 11} fontWeight={700} fill={fill}>{text}</text>
    </g>
  );
}

function Chart({ spec, macd, axis = "w-[46px]" }) {
  const [ref, { w, h }] = useSize();
  const [x0, y0, x1, y1] = spec.box;
  const X = (v) => ((v - x0) / (x1 - x0)) * w;
  const Y = (v) => ((v - y0) / (y1 - y0)) * h;
  return (
    <div className="flex min-h-0 flex-1 bg-white">
      <div className="flex min-w-0 flex-1 flex-col">
        <div ref={ref} className="min-h-0 flex-1 overflow-hidden border-r border-[#6f828c] bg-linear-to-b from-white via-[#edf2fd] to-[#d9e4fe]">
          <svg width={w} height={h} className="block">
            {spec.labels.map(([x, y, text, fill, size, anchor = "start", weight = 700], i) => (
              <text key={i} x={X(x)} y={Y(y)} fill={fill} fontSize={size} textAnchor={anchor} fontWeight={weight}>{text}</text>
            ))}
            <g shapeRendering="crispEdges">
              {spec.candles.map((c, i) => <Candle key={i} c={c} X={X} Y={Y} body={spec.body} />)}
              {spec.levels.map(([y, from, to, stroke, width, dash], i) => (
                <line key={i} x1={X(from)} x2={X(to)} y1={Math.round(Y(y)) + (width % 2) / 2} y2={Math.round(Y(y)) + (width % 2) / 2} stroke={stroke} strokeWidth={width} strokeDasharray={dash} />
              ))}
            </g>
            {spec.averages.map(([stroke, pts], i) => (
              <polyline key={i} points={pts.split(" ").map((p) => p.split(",").map(Number)).map(([x, y]) => `${X(x)},${Y(y)}`).join(" ")} fill="none" stroke={stroke} strokeWidth="2" strokeDasharray="5 4" />
            ))}
            {spec.trends.map(([ax, ay, bx, by, stroke, width], i) => (
              <line key={i} x1={X(ax)} y1={Y(ay)} x2={X(bx)} y2={Y(by)} stroke={stroke} strokeWidth={width} />
            ))}
          </svg>
        </div>
        {macd && (
          <div className="h-[17px] shrink-0 border-t border-r border-[#6f828c] bg-[#d9e4fe]">
            <span className="inline-block h-full border-r border-[#6f828c] bg-[#cad8de] px-[3px] align-top text-[10px] leading-[14px] font-bold">MACD (12 26 9)</span>
          </div>
        )}
        <div className="h-5 shrink-0 border-t border-[#6f828c]">
          <svg width={w} height={19} className="block overflow-visible">
            {spec.times.map(([x, t], i) => (
              <g key={i}>
                <rect x={Math.round(X(x))} y={0} width={1} height={3} fill="#6f828c" />
                <text x={X(x)} y={13} fontSize={10} fontWeight={700} textAnchor="middle">{t}</text>
              </g>
            ))}
            {spec.cursor && (
              <g>
                <rect x={X(spec.cursor[0]) - 58} y={4.5} width={115} height={14} fill="#ffff00" stroke="#808010" />
                <text x={X(spec.cursor[0])} y={15} fontSize={10} fontWeight={700} textAnchor="middle">{spec.cursor[1]}</text>
              </g>
            )}
          </svg>
        </div>
      </div>
      <div className={`${axis} flex shrink-0 flex-col justify-between`}>
        <svg width="100%" height={h + 4} className="block">
          {spec.prices.map(([y, t], i) => (
            <g key={i}>
              <rect x={0} y={Math.round(Y(y))} width={t ? 4 : 2} height={1} fill="#6f828c" />
              <text x={6} y={Y(y) + 4} fontSize={11} fontWeight={700}>{t}</text>
            </g>
          ))}
          {spec.tags.map(([y, text, fill, narrow]) => (
            <PriceTag key={text} y={Math.round(Y(y))} text={text} fill={fill} narrow={narrow} />
          ))}
        </svg>
        <button aria-label="Clavier" className="flex h-4 w-[25px] items-center justify-center self-end border-t border-l border-[#43596a]">
          <svg width="19" height="14" viewBox="0 0 19 14">
            <path d="M9.500 8V1.500M6.500 4.500L9.500 1l3 3.500" stroke="#1c55c8" strokeWidth="2" fill="none" />
            <rect x="0.500" y="8.500" width="18" height="5" fill="#fff" stroke="#6f828c" />
            <path d="M2.500 11h14" stroke="#222" strokeWidth="2.500" strokeDasharray="2.500 1.300" />
          </svg>
        </button>
      </div>
    </div>
  );
}

const Panel = ({ children, className = "" }) => (
  <section className={`flex min-h-0 min-w-0 flex-col overflow-hidden ${className}`}>{children}</section>
);

/* ---------- order ladder and watch list ---------- */

const DEPTH = Array.from({ length: 67 }, (_, i) => `32 ${830 - i}`);

const HEAD = "h-[14px] p-0 align-top";
const HEAD_TEXT = "block border-white text-[11px] leading-[11px]";

function Ladder() {
  return (
    <div className="relative min-h-0 flex-1 overflow-hidden">
      <table className="w-full table-fixed border-collapse text-[11px]">
        <colgroup>
          <col className="w-[62px]" /><col className="w-[47px]" /><col className="w-[60px]" /><col className="w-[44px]" /><col />
        </colgroup>
        <thead>
          <tr className="bg-[#42668e] text-white">
            <th className={HEAD}><span className="flex items-start justify-between border-r border-white pr-0.5 pl-px text-[11px] leading-[11px]"><WrenchIcon />A.Ordre</span></th>
            <th className={HEAD}><span className={`${HEAD_TEXT} border-r`}>Acheter</span></th>
            <th className={HEAD}><span className={`${HEAD_TEXT} border-r`}>Bid/Ask</span></th>
            <th className={HEAD}><span className={`${HEAD_TEXT} border-r`}>Vendre</span></th>
            <th className={HEAD}><span className={HEAD_TEXT}>V.Ordre</span></th>
          </tr>
        </thead>
        <tbody>
          {DEPTH.map((p, i) => {
            const odd = i % 2;
            const side = odd ? "bg-[#d0d7df]" : "bg-[#d7e6ec]";
            return (
              <tr key={p} className="h-[17px]">
                <td className={`border-r border-[#a9b7bd] p-0 ${side}`} />
                <td className={`p-0 ${odd ? "bg-[#9cbfe4]" : "bg-[#a2cbf4]"}`} />
                <td className={`p-0 text-center align-top leading-[13px] font-bold text-white ${i === 4 ? "bg-[#7a6234]" : "bg-[#656565]"}`}>{p}</td>
                <td className={`border-r border-[#a9b7bd] p-0 ${odd ? "bg-[#dca2a7]" : "bg-[#e1acb3]"}`} />
                <td className={`p-0 ${side}`} />
              </tr>
            );
          })}
        </tbody>
      </table>
      <button aria-label="Monter" className="absolute top-[15px] left-[126px] flex h-6 w-[26px] items-center justify-center border border-[#42668e]/60 bg-[#656565]/30">
        <svg width="12" height="14" viewBox="0 0 12 14"><path d="M1.500 6.500L6 2.500l4.500 4M1.500 12.500L6 8.500l4.500 4" fill="none" stroke="#fff" strokeWidth="2" /></svg>
      </button>
      <button aria-label="Descendre" className="absolute bottom-0.5 left-[126px] flex h-6 w-[26px] items-center justify-center border border-[#42668e]/60 bg-[#656565]/30">
        <svg width="12" height="14" viewBox="0 0 12 14"><path d="M1.500 1.500L6 5.500l4.500-4M1.500 7.500L6 11.500l4.500-4" fill="none" stroke="#fff" strokeWidth="2" /></svg>
      </button>
    </div>
  );
}

const CHECK = "h-3 w-3 shrink-0 appearance-none rounded-[2px] border border-[#6f8792] bg-white";
const SMALL = "w-[22px] rounded-[3px] border border-[#6f8792] bg-transparent text-center text-[10px] font-bold text-[#7d8b92]";
const BIG = "rounded-[2px] border border-[#6f8792] bg-white text-right font-bold outline-none";

function LadderEntry() {
  return (
    <div className="flex h-[63px] shrink-0 border-t border-[#6f828c] bg-[#cddbe2] text-[11px] font-bold">
      <div className="flex w-[167px] items-end">
        <label className="flex w-[78px] flex-col items-center gap-1">
          Qté
          <input defaultValue="1" className={`${BIG} mb-1.5 h-[34px] w-full pr-0.5 pb-2 text-[20px]`} />
        </label>
        <span className="flex h-[46px] w-[17px]"><LinkedIcon /></span>
        <label className="flex w-[72px] flex-col items-center gap-1">
          Pt ($)
          <input defaultValue="0.5" className={`${BIG} mb-1.5 h-[34px] w-full rounded-r-none border-r-0 pb-2 text-[20px]`} />
        </label>
      </div>
      <div className="flex flex-1 flex-col justify-center gap-0.5 pb-1 pl-1">
        {["T", "Ss"].map((n) => (
          <div key={n} className="flex items-center">
            <label className="flex w-[29px] items-center gap-1"><input type="checkbox" className={CHECK} />{n}</label>
            <label className="flex items-center gap-[3px]"><input defaultValue="10" aria-label={`${n} points`} className={`${SMALL} h-[22px]`} />pts</label>
            {n === "Ss" && <span className="ml-1 w-4 overflow-hidden"><CheckChartIcon /></span>}
          </div>
        ))}
      </div>
    </div>
  );
}

const STOCKS = [
  ["META PLATFORM...", "-0,96 %", "170,39(c)"],
  ["BLACKROCK INC.", "-1,22 %", "683,43(c)"],
  ["NVIDIA CORP.", "-1,60 %", "232,86(c)"],
  ["APPLE INC.", "-1,80 %", "146,71(c)"],
  ["ALPHABET INC. CL...", "-1,94 %", "89,13(c)"],
  ["MICROSOFT CORP.", "-2,18 %", "249,22(c)"],
  ["AMAZON.COM INC.", "-2,42 %", "93,50(c)"],
  ["TESLA INC.", "-2,57 %", "196,88(c)"],
];

function WatchList() {
  return (
    <div className="shrink-0">
      <div className={`${BAR} border-t`}>
        <div className={`${SEG} w-6`}><CandleIcon /></div>
        <div className={`${SEG} w-[18px]`}><ChainIcon /></div>
        <span className={`${SEG} w-[37px] pb-0.5 text-[10px] font-bold`}>Listes</span>
        <label className={`${SEG} relative w-[57px] pl-[9px]`}>
          <select aria-label="Liste" className="w-full appearance-none bg-transparent pb-0.5 text-[10px] font-bold outline-none"><option>NAZE 8</option></select>
          <span className="pointer-events-none absolute right-[3px]"><Chevron /></span>
        </label>
        <div className="flex flex-1 items-center gap-2.5 pl-0.5">
          <svg width="21" height="19" viewBox="0 0 21 19">
            <path d="M4 0v7M0.500 3.500h7" stroke="#fff" strokeWidth="2.400" />
            <rect x="4" y="3" width="15" height="13" fill="#fff" stroke="#c9b79a" strokeWidth="0.600" />
            <rect x="4" y="8" width="15" height="4" fill="#ff9a2a" />
            <path d="M4 0v7M0.500 3.500h7" stroke="#8ba0a8" strokeWidth="1" />
            <path d="M14 15h6l-3 3.500z" fill="#000" />
          </svg>
          <svg width="12" height="11" viewBox="0 0 12 11"><path d="M0 1.500h12M0 5.500h12M0 9.500h12" stroke="#27333a" strokeWidth="2" /></svg>
        </div>
        <WinControls />
      </div>
      <table className="w-full table-fixed border-collapse text-[11px] font-bold">
        <colgroup><col className="w-[18px]" /><col className="w-[96px]" /><col className="w-[68px]" /><col /></colgroup>
        <thead>
          <tr className="h-[15px] bg-[#42668e] text-white">
            <th className={`${HEAD} pl-0.5`}><WrenchIcon /></th>
            <th className={HEAD}><span className={`${HEAD_TEXT} border-x`}>Nom</span></th>
            <th className={HEAD}><span className={`${HEAD_TEXT} border-r`}><span className="mr-1 text-[8px]">▽</span>%Var</span></th>
            <th className={HEAD}><span className={HEAD_TEXT}>Dernier</span></th>
          </tr>
        </thead>
        <tbody>
          {STOCKS.map(([n, v, d], i) => (
            <tr key={n} className={`h-5 leading-4 ${i % 2 ? "bg-[#d0d7df]" : "bg-[#d7e6ec]"}`}>
              <td className="border-r border-[#a3b3bb] p-0" />
              <td className="overflow-hidden border-r border-[#a3b3bb] p-0 align-top text-[10px] whitespace-nowrap">{n}</td>
              <td className="border-r border-[#a3b3bb] p-0 pr-px text-right align-top text-[#a00000]">{v}</td>
              <td className="p-0 pr-0.5 text-right align-top text-[#a00000]">{d}</td>
            </tr>
          ))}
        </tbody>
      </table>
    </div>
  );
}

/* ---------- order ticket ---------- */

function Stepper({ label }) {
  return (
    <div className="flex h-[22px] w-14 overflow-hidden rounded-[3px] border border-[#6f8792] bg-white">
      <input aria-label={label} defaultValue="0" className="min-w-0 flex-1 pr-0.5 pb-1 text-right text-[11px] font-bold outline-none" />
      <div className="flex w-[17px] flex-col border-l border-[#6f8792] bg-[#a9c6d3]">
        <button aria-label={`${label} plus`} className="flex flex-1 rotate-180 items-center justify-center border-t border-[#6f8792]"><Chevron /></button>
        <button aria-label={`${label} moins`} className="flex flex-1 items-center justify-center opacity-40"><Chevron /></button>
      </div>
    </div>
  );
}

function MarketButton({ title, price, className }) {
  return (
    <button className={`flex flex-col items-center border border-black ${className}`}>
      <span className="pt-[3px] text-[20px] leading-6 font-bold">{title}</span>
      <span className="pt-1.5 text-[58px] leading-[66px] font-black">{price}</span>
    </button>
  );
}

function Ticket() {
  const line = "border-[#6f8792]";
  return (
    <Panel className="bg-[#cddbe2]">
      <div className={BAR}>
        <div className={`${SEG} w-6`}><CandleIcon /></div>
        <div className={`${SEG} w-[18px]`}><ChainIcon /></div>
        <Pick value="MYMXXXX" label="Instrument" width="w-[73px]" />
        <div className="flex h-full min-w-0 flex-1 items-center gap-2 pl-[7px]"><InfoIcon /><Quote /></div>
        <LadderIcon />
        <WinControls pin />
      </div>
      <div className="grid min-h-0 flex-1 grid-cols-3 grid-rows-[204fr_117fr] text-[11px] font-bold">
        <div className="flex flex-col justify-center gap-1 pb-2 pl-[15px] text-[10px] leading-4">
          <dl className="grid grid-cols-[59px_auto] gap-y-1">
            <dt>Gain latent :</dt><dd>0,00 pts</dd>
            <dt>Gain jour :</dt><dd>0,00 pts</dd>
            <dt>Trades jour :</dt><dd><span className="text-[#0096ff]">0</span> / 0 / <span className="text-[#c00000]">0</span></dd>
          </dl>
        </div>
        <div className={`flex min-w-0 flex-col border-x ${line}`}>
          <div className={`flex flex-[131] flex-col items-center border-b pt-1.5 ${line}`}>
            <div className="flex items-end pl-2">
              <label className="flex flex-col items-center gap-1 leading-4">Qté<input defaultValue="1" className={`${BIG} h-[34px] w-[78px] pr-0.5 pb-2 text-[20px]`} /></label>
              <span className="flex h-[34px] w-[17px]"><LinkedIcon /></span>
              <label className="flex flex-col items-center gap-1 leading-4">Pt ($)<input defaultValue="0.5" className={`${BIG} h-[34px] w-[78px] pr-1 pb-2 text-[20px]`} /></label>
            </div>
            <div className="mt-2.5 flex items-center gap-6 pl-1 text-[10px]">
              <div className="flex items-center gap-2">
                <label className="flex items-center gap-1"><input type="checkbox" className={CHECK} />Ss</label>
                <label className="flex items-center gap-0.5"><input defaultValue="10" aria-label="Ss points" className={`${SMALL} h-[22px]`} />pts</label>
              </div>
              <div className="flex items-center gap-2">
                <label className="flex items-center gap-1"><input type="checkbox" className={CHECK} />Target</label>
                <label className="flex items-center gap-0.5"><input defaultValue="10" aria-label="Target points" className={`${SMALL} h-[22px]`} />pts</label>
              </div>
            </div>
            <label className="mt-4 flex items-center gap-1 text-[10px] leading-4"><input type="checkbox" className={CHECK} />Clôture partielle</label>
          </div>
          <div className="flex flex-[72] flex-col items-center gap-[11px] pt-2.5">
            <label className="flex items-center gap-1.5 text-[10px]">
              Prix de référence :
              <span className="relative flex items-center">
                <select className="h-[18px] w-[93px] appearance-none rounded-[2px] border border-[#6f8792] bg-linear-to-b from-white to-[#eceff1] pb-0.5 pl-1 text-[10px] font-bold"><option>Prix de position</option></select>
                <span className="pointer-events-none absolute right-0.5"><Chevron /></span>
              </span>
            </label>
            <div className="flex gap-11"><Stepper label="Stop" /><Stepper label="Limite" /></div>
          </div>
        </div>
        <div />
        <MarketButton title="Vente MKT 1" price="32 756" className="bg-[#e9baba]" />
        <div className="flex min-w-0 flex-col text-[10px] text-[#83949c]">
          <div className={`grid h-[28px] grid-cols-[125fr_135fr] border-y ${line}`}>
            <button className={`border-r pb-1 ${line}`}>Stop à 0 ticks</button>
            <button className="pb-1">Limite à 0 ticks</button>
          </div>
          <div className="flex flex-1 items-center justify-center pb-1.5">Pas de position</div>
        </div>
        <MarketButton title="Achat MKT 1" price="32 833" className="bg-[#00b2ff]" />
      </div>
      <div className="flex h-[25px] shrink-0 items-center border-t border-[#6f8792] bg-[#9ab8c4] text-[10px] font-bold text-[#5f7a86]">
        <div className={`${SEG} w-[54px] gap-1`}>
          <svg width="20" height="17" viewBox="0 0 20 17">
            <rect x="0.500" y="0.500" width="18" height="13" fill="#fff" stroke="#3a464c" />
            <rect x="1" y="5" width="6" height="8" fill="#ff8080" /><rect x="13" y="5" width="5" height="8" fill="#40c040" />
            <path d="M0 4.500h18M7 1v13M12.500 1v13M1 9h17" stroke="#3a464c" />
            <path d="M13 13h7l-3.500 4z" fill="#000" />
          </svg>
          <svg width="19" height="15" viewBox="0 0 19 15"><rect x="0.500" y="2" width="18" height="12" rx="2" fill="#6f8c98" /><path d="M3 5.500h13M3 8h13M3 10.500h13" stroke="#a9c2cc" strokeDasharray="1.500 1" strokeWidth="1.300" /></svg>
        </div>
        <button className={`${SEG} flex-1 basis-0 pb-1`}>Inverser position</button>
        <button className={`${SEG} flex-1 basis-0 pb-1`}>Pas d'ordres en attente</button>
        <div className="flex w-[54px] items-center justify-center gap-2">
          <CheckChartIcon />
          <svg width="17" height="17" viewBox="0 0 17 17">
            <path d="M1 1h9v4H1zM2 12h8v4H2z" fill="#17a12c" stroke="#0a5a16" /><path d="M9 4h6v4H9zM10 9h6v4h-6z" fill="#e23c42" stroke="#8c1418" />
            <path d="M3 13l6-5" stroke="#111" strokeWidth="4" /><path d="M3 13l6-5M9 8c-1-3 1-5 3-5v3l2 1c0 2-2 3-5 1z" stroke="#fff" strokeWidth="1.800" fill="#fff" />
          </svg>
        </div>
      </div>
    </Panel>
  );
}

/* ---------- drawing toolbar ---------- */

const Lens = ({ sign, faded }) => (
  <svg width="19" height="18" viewBox="0 0 19 18" aria-hidden="true" opacity={faded ? 0.5 : 1}>
    <path d="M10.500 10.500l6.500 6" stroke={faded ? "#4a6470" : "#000"} strokeWidth="2.600" />
    <circle cx="7" cy="7" r="5.500" fill={faded ? "#8fabb8" : "#fff"} stroke={faded ? "#4a6470" : "#000"} strokeWidth="1.300" />
    {sign && <path d={sign === "+" ? "M4 7h6M7 4v6" : "M4 7h6"} stroke="#1111ee" strokeWidth="2" />}
    {faded && <path d="M17 1v10M15 3l2-2 2 2M0 16h9M2 14l-2 2 2 2" stroke="#3a62d8" fill="none" />}
  </svg>
);

function DrawBar() {
  return (
    <div className="absolute bottom-[38px] left-1/2 flex h-6 w-[632px] -translate-x-1/2 items-center border border-[#6f8792] bg-[#9ab7c4]">
      <button aria-label="Dessiner" className={`${SEG} w-[29px]`}>
        <svg width="19" height="17" viewBox="0 0 19 17">
          <path d="M1 15l4-10 2 8 3-7 1 7" stroke="#4a565c" fill="none" /><path d="M1 1l10 9" stroke="#f02020" strokeWidth="1.400" /><path d="M0 15.500h10" stroke="#12a02a" strokeWidth="1.400" />
          <path d="M9 15l1-4 6-9 3 2-6 9z" fill="#ffd23c" stroke="#8a6a10" strokeWidth="0.800" />
        </svg>
      </button>
      <button aria-label="Menu" className="w-6 pl-1.5"><svg width="12" height="11" viewBox="0 0 12 11"><path d="M0 1.500h12M0 5.500h12M0 9.500h12" stroke="#27333a" strokeWidth="2" /></svg></button>
      <button aria-label="Plus" className="w-[18px] pl-1"><svg width="9" height="9" viewBox="0 0 9 9"><path d="M1 1l3 3.500L1 8M5 1l3 3.500L5 8" stroke="#4a5c66" fill="none" strokeWidth="1.300" /></svg></button>
      <div className="flex h-4 min-w-0 flex-1 items-stretch">
        <button aria-label="Reculer" className="flex w-4 items-center justify-center rounded-[2px] border border-[#6f8792] bg-[#b5d0dc]"><span className="rotate-90"><Chevron /></span></button>
        <div className="flex flex-1 justify-end border-y border-[#6f8792] bg-[#9ab7c3]"><div className="w-[85px] border-x border-[#6f8792] bg-linear-to-b from-[#b3d0dc] to-[#9fbecb]" /></div>
        <button aria-label="Avancer" className="flex w-4 items-center justify-center rounded-[2px] border border-[#6f8792] bg-[#b5d0dc]"><span className="-rotate-90"><Chevron /></span></button>
      </div>
      <div className="flex w-[184px] items-center justify-between pr-0.5 pl-1.5">
        <svg width="20" height="17" viewBox="0 0 20 17">
          <rect x="5" y="2" width="14" height="11" fill="#fff" stroke="#7b98a8" /><path d="M5 3.500h14" stroke="#1b7fc4" strokeWidth="3" /><path d="M7 8h10M7 11h10" stroke="#c05050" strokeDasharray="2 1.500" />
          <path d="M0 12l6-5v3h7v4H6v3z" fill="#35c93c" stroke="#158a1d" strokeWidth="0.800" />
        </svg>
        <svg width="16" height="14" viewBox="0 0 16 14"><path d="M1 5.500L6.500 1v9z" fill="#6296cf" /><path d="M6 5.500c6-1 8 2 7 7" stroke="#6296cf" strokeWidth="3" fill="none" /></svg>
        <svg width="16" height="14" viewBox="0 0 16 14"><path d="M15 5.500L9.500 1v9z" fill="#6296cf" /><path d="M10 5.500c-6-1-8 2-7 7" stroke="#6296cf" strokeWidth="3" fill="none" /></svg>
        <svg width="17" height="17" viewBox="0 0 17 17">
          <rect x="1" y="8" width="5" height="6" fill="#e23c42" stroke="#8c1418" /><rect x="11" y="2" width="5" height="12" fill="#3dc94a" stroke="#128a1d" />
          <path d="M3 14l6-6" stroke="#111" strokeWidth="4" /><path d="M3 14l6-6M9 8c-1-3 1-5 3-5v3l2 1c0 2-2 3-5 1z" stroke="#fff" strokeWidth="1.600" fill="#fff" />
        </svg>
        <Lens faded />
        <Lens sign="-" />
        <Lens sign="+" />
      </div>
    </div>
  );
}

export default function App() {
  return (
    <main className="grid h-screen grid-cols-[1030fr_258px_1266fr] gap-0.5 overflow-hidden bg-[#43596a] px-px pt-px font-['Lato',sans-serif] text-black">
      <div className="grid min-h-0 min-w-0 grid-rows-[minmax(0,480fr)_minmax(0,469fr)_minmax(0,485fr)] gap-0.5">
        <Panel>
          <ChartBar active="15m" frame="15m" units="100U" frameWidth="w-[44px]" unitWidth="w-[46px]" />
          <Chart spec={chart15m} />
        </Panel>
        <Panel>
          <ChartBar active="5m" frame="5m" units="100U" frameWidth="w-[38px]" unitWidth="w-[46px]" />
          <Chart spec={chart5m} macd />
        </Panel>
        <Panel>
          <ChartBar active="2m" frame="2m" units="100U" frameWidth="w-[38px]" unitWidth="w-[46px]" />
          <Chart spec={chart2m} macd />
        </Panel>
      </div>

      <Panel>
        <div className={BAR}>
          <div className={`${SEG} w-6`}><CandleIcon /></div>
          <div className={`${SEG} w-[18px]`}><ChainIcon /></div>
          <Pick value="MYMXXXX" label="Instrument" width="w-[73px]" />
          <div className="flex h-full flex-1 items-center justify-center gap-1"><InfoIcon /><LadderIcon /></div>
          <button aria-label="Actualiser" className={`${SEG} w-[25px] border-l bg-[#8fa8b3]`}><RefreshIcon /></button>
          <WinControls pin />
        </div>
        <Ladder />
        <LadderEntry />
        <WatchList />
      </Panel>

      <div className="grid min-h-0 min-w-0 grid-cols-[minmax(0,779fr)_minmax(0,485fr)] grid-rows-[minmax(0,360fr)_minmax(0,371fr)_minmax(0,703fr)] gap-0.5">
        <Panel>
          <ChartBar active="15m" frame="15m" units="200U" quote="short" frameWidth="w-[44px]" unitWidth="w-[46px]" />
          <Chart spec={chart15mWide} macd />
        </Panel>
        <Panel>
          <ChartBar frame="J" units="3M" frames={FRAMES.slice(0, 5)} quote="" frameWidth="w-[26px]" unitWidth="w-[38px]" />
          <Chart spec={chartDay} macd />
        </Panel>
        <Ticket />
        <Panel>
          <ChartBar frame="S" units="2A" frames={FRAMES.slice(0, 5)} quote="" frameWidth="w-[27px]" unitWidth="w-[35px]" />
          <Chart spec={chartWeek} macd />
        </Panel>
        <Panel className="relative col-span-2">
          <ChartBar active="100Ti" frame="100Ti" units="150U" frameWidth="w-[48px]" unitWidth="w-[47px]" checked />
          <Chart spec={chartTicks} axis="w-10" />
          <DrawBar />
        </Panel>
      </div>
    </main>
  );
}
